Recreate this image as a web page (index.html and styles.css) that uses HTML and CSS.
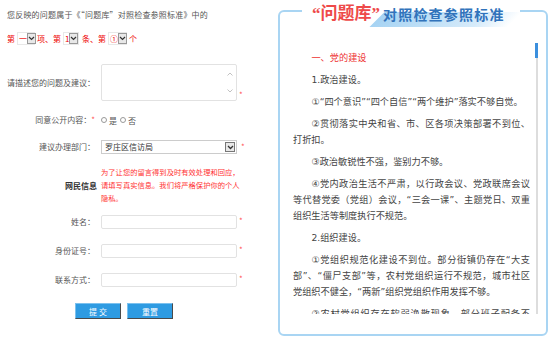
FILE: index.html
```html
<!DOCTYPE html>
<html lang="zh-CN">
<head>
	<meta charset="UTF-8">
	<meta name="viewport" content="width=device-width, initial-scale=1.0">
	<title>问题库 - 留言反映</title>
	<link rel="stylesheet" href="styles.css">
</head>
<body>

<div class="page">
	<div class="feedback">
		<p class="intro">您反映的问题属于《“问题库”对照检查参照标准》中的</p>
		<div class="pick">
			<span>第</span>
			<span class="mini-select sel-a"><span class="val">一</span><span class="arrow"><svg width="7" height="5" viewBox="0 0 7 5"><path d="M1 1l2.5 2.5L6 1" fill="none" stroke="#333" stroke-width="1.2"/></svg></span></span>
			<span>项、第</span>
			<span class="mini-select sel-b"><span class="val">1</span><span class="arrow"><svg width="7" height="5" viewBox="0 0 7 5"><path d="M1 1l2.5 2.5L6 1" fill="none" stroke="#333" stroke-width="1.2"/></svg></span></span>
			<span class="after-b">条、第</span>
			<span class="mini-select sel-c"><span class="val">①</span><span class="arrow"><svg width="7" height="5" viewBox="0 0 7 5"><path d="M1 1l2.5 2.5L6 1" fill="none" stroke="#333" stroke-width="1.2"/></svg></span></span>
			<span>个</span>
		</div>

		<div class="form">
			<div class="row row-text">
				<label class="lbl" for="content">请描述您的问题及建议：</label>
				<div class="textbox">
					<textarea id="content"></textarea>
					<svg class="ta-up" width="6" height="4" viewBox="0 0 6 4"><path d="M0.5 3.5L3 1l2.5 2.5" fill="none" stroke="#bbb" stroke-width="0.9"/></svg>
					<svg class="ta-down" width="6" height="4" viewBox="0 0 6 4"><path d="M0.5 0.5L3 3l2.5-2.5" fill="none" stroke="#bbb" stroke-width="0.9"/></svg>
				</div>
				<span class="star star-low">*</span>
			</div>

			<div class="row row-radio">
				<span class="lbl">同意公开内容：<span class="star">*</span></span>
				<div class="radios">
					<label><input type="radio" name="open">是</label>
					<label><input type="radio" name="open">否</label>
				</div>
			</div>

			<div class="row row-dept">
				<span class="lbl">建议办理部门：</span>
				<div class="dept-select">
					<span class="val">罗庄区信访局</span>
					<span class="arrow"><svg width="7" height="5" viewBox="0 0 7 5"><path d="M1 1l2.5 2.5L6 1" fill="none" stroke="#333" stroke-width="1.3"/></svg></span>
				</div>
				<span class="star star-mid">*</span>
			</div>

			<div class="row row-info">
				<span class="lbl lbl-bold">网民信息</span>
				<p class="notice">为了让您的留言得到及时有效处理和回应，请填写真实信息。我们将严格保护你的个人隐私。</p>
			</div>

			<div class="row">
				<label class="lbl" for="userName">姓名：</label>
				<input class="field" type="text" id="userName">
				<span class="star star-top">*</span>
			</div>

			<div class="row">
				<label class="lbl" for="idCard">身份证号：</label>
				<input class="field" type="text" id="idCard">
				<span class="star star-top">*</span>
			</div>

			<div class="row">
				<label class="lbl" for="phone">联系方式：</label>
				<input class="field" type="text" id="phone">
				<span class="star star-top">*</span>
			</div>

			<div class="buttons">
				<button>提 交</button>
				<button>重置</button>
			</div>
		</div>
	</div>

	<div class="standard">
		<div class="std-title"><span class="q-red">“问题库”</span><span class="q-blue">对照检查参照标准</span></div>
		<div class="std-body">
			<div class="article">
				<p class="head">一、党的建设</p>
				<p>1.政治建设。</p>
				<p>①“四个意识”“四个自信”“两个维护”落实不够自觉。</p>
				<p>②贯彻落实中央和省、市、区各项决策部署不到位、打折扣。</p>
				<p>③政治敏锐性不强，鉴别力不够。</p>
				<p>④党内政治生活不严肃，以行政会议、党政联席会议等代替党委（党组）会议，“三会一课”、主题党日、双重组织生活等制度执行不规范。</p>
				<p>2.组织建设。</p>
				<p>①党组织规范化建设不到位。部分街镇仍存在“大支部”、“僵尸支部”等，农村党组织运行不规范，城市社区<span class="nobr">党组织不健全，</span>“两新”组织党组织作用发挥不够。</p>
				<p>②农村党组织存在软弱涣散现象，部分班子配备不齐、不强，带头人能力不足。</p>
			</div>
			<div class="scrollbar"><div class="thumb"></div></div>
		</div>
	</div>
</div>

</body>
</html>
```

FILE: styles.css
```css
* {
	box-sizing: border-box;
}
body {
	margin: 0;
	font-family: "Noto Sans CJK SC", sans-serif;
	color: #555;
	background: #fff;
}
.page {
	display: flex;
	width: 554px;
	height: 340px;
	overflow: hidden;
}

/* left: feedback form */
.feedback {
	flex: 0 0 270px;
	padding: 9px 0 0 7px;
	font-size: 8px;
}
.intro {
	margin: 0;
	line-height: 12px;
	letter-spacing: 0.2px;
}
.pick {
	display: flex;
	align-items: center;
	gap: 2px;
	margin-top: 11px;
	height: 13px;
	line-height: 13px;
	color: #e00;
}
.after-b {
	margin-left: 1px;
}
.mini-select {
	display: inline-flex;
	height: 13px;
	border: 1px solid #e8e8e8;
	background: #fff;
}
.mini-select .val {
	flex: 1;
	padding-left: 1px;
	line-height: 11px;
}
.mini-select .arrow,
.dept-select .arrow {
	display: flex;
	align-items: center;
	justify-content: center;
	width: 9px;
	border: 1px solid #999;
	background: #e8e8e8;
}
.sel-a { width: 18px; }
.sel-b { width: 16px; }
.sel-c { width: 19px; }

.form {
	margin-top: 19px;
}
.row {
	display: flex;
	align-items: center;
	margin-top: 15px;
}
.row-text {
	margin-top: 0;
}
.row-radio {
	margin-top: 13px;
	height: 12px;
}
.row-dept {
	margin-top: 14px;
}
.row-info {
	margin-top: 12px;
	margin-bottom: -5px;
}
.lbl {
	flex: none;
	width: 88px;
	margin-right: 6px;
	text-align: right;
	line-height: 12px;
}
.lbl-bold {
	font-weight: bold;
	color: #333;
	width: 90px;
	margin-right: 4px;
}
.star {
	color: #f55;
	font-size: 8px;
	line-height: 10px;
	margin-left: 2px;
}
.lbl .star {
	margin-left: 0;
}
.star-low {
	align-self: flex-end;
	margin-bottom: 1px;
}
.star-top {
	align-self: flex-start;
	margin-top: 1px;
}
.star-mid {
	margin-left: 4px;
}
.textbox {
	position: relative;
	width: 136px;
	height: 37px;
}
textarea {
	display: block;
	width: 100%;
	height: 100%;
	resize: none;
	border: 1px solid #e2e2e2;
	border-radius: 2px;
	outline: none;
}
.ta-up,
.ta-down {
	position: absolute;
	right: 4px;
}
.ta-up { top: 8px; }
.ta-down { top: 25px; }

.radios {
	display: flex;
	gap: 3px;
}
.radios label {
	display: flex;
	align-items: center;
}
.radios input {
	appearance: none;
	width: 6px;
	height: 6px;
	margin: 0 2px 0 0;
	border: 1px solid #999;
	border-radius: 50%;
}

.dept-select {
	display: flex;
	width: 136px;
	height: 14px;
	padding: 1px;
	border: 1px solid #ccc;
	color: #333;
}
.dept-select .val {
	flex: 1;
	padding-left: 2px;
	line-height: 10px;
}
.dept-select .arrow {
	width: 10px;
	border-color: #777;
}

.notice {
	margin: 0;
	width: 140px;
	font-size: 7.3px;
	line-height: 13px;
	color: #f33;
}
.field {
	width: 136px;
	height: 14px;
	padding: 0 3px;
	border: 1px solid #e2e2e2;
	border-radius: 2px;
	outline: none;
}
.buttons {
	display: flex;
	gap: 6px;
	margin-top: 16px;
	padding-left: 68px;
}
.buttons button {
	width: 46px;
	height: 16px;
	padding: 0;
	font-family: inherit;
	font-size: 8px;
	color: #fff;
	background: #2e9be2;
	border: 1px solid;
	border-color: #7cc1ee #4a4a4a #4a4a4a #7cc1ee;
	cursor: pointer;
}

/* right: reference standard */
.standard {
	position: relative;
	flex: none;
	width: 270px;
	height: 326px;
	margin: 10px 0 0 8px;
	padding: 31px 8px 0 13px;
	border: 2px solid #a9d5f3;
	border-radius: 6px;
}
.std-title {
	position: absolute;
	left: 22px;
	top: -10px;
	height: 22px;
	padding: 0 15px 0 10px;
	display: flex;
	align-items: flex-end;
	white-space: nowrap;
	background: #fff;
	font-weight: bold;
	line-height: 20px;
}
.q-red {
	font-family: "Liberation Serif", "Noto Sans CJK SC", serif;
	font-size: 17px;
	color: #ee4a4a;
}
.q-blue {
	position: relative;
	z-index: 0;
	margin-left: 3px;
	font-size: 14px;
	letter-spacing: 1.2px;
	color: #3173bb;
}
.q-blue::before {
	content: "";
	position: absolute;
	z-index: -1;
	left: -6px;
	right: -10px;
	top: 8px;
	bottom: -3px;
	transform: skewX(-45deg);
	background: linear-gradient(to right, #a6d3f3, #d6ebfa 75%, rgba(255, 255, 255, 0));
}
.std-body {
	display: flex;
	gap: 5px;
	height: 271px;
}
.article {
	width: 237px;
	height: 271px;
	overflow: hidden;
	padding-top: 7px;
	font-family: "DejaVu Sans", "Noto Sans CJK SC", sans-serif;
	font-size: 9.2px;
	line-height: 16px;
	color: #444;
}
.article p {
	margin: 0 0 6px;
	text-indent: 2em;
	text-align: justify;
}
.article .head {
	color: #e33;
}
.nobr {
	white-space: nowrap;
}
.scrollbar {
	width: 3px;
	height: 271px;
	background: linear-gradient(#ddd, #ddd) center / 2px 100% no-repeat;
}
.thumb {
	height: 15px;
	background: #3b8fdd;
}
```
